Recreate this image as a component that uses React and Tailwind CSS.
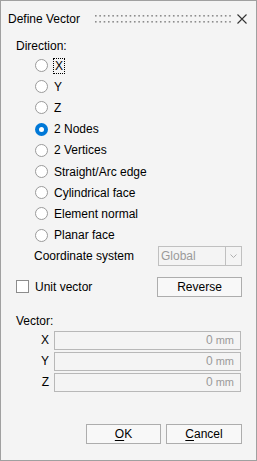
import React from "react";

const options = [
  "X",
  "Y",
  "Z",
  "2 Nodes",
  "2 Vertices",
  "Straight/Arc edge",
  "Cylindrical face",
  "Element normal",
  "Planar face",
];

const Radio = ({ checked }) =>
  checked ? (
    <span className="w-[13px] h-[13px] rounded-full bg-[#0078d7] flex items-center justify-center">
      <span className="w-[5px] h-[5px] rounded-full bg-white" />
    </span>
  ) : (
    <span className="w-[13px] h-[13px] rounded-full border border-[#9a9a9a] bg-white" />
  );

const Dots = () => (
  <svg width="136" height="10" viewBox="0 0 136 10" className="block">
    {Array.from({ length: 32 }).map((_, i) => (
      <g key={i} fill="#8c8c8c">
        <rect x={i * 4.33} y="1" width="1.6" height="1.6" />
        <rect x={i * 4.33} y="7" width="1.6" height="1.6" />
      </g>
    ))}
  </svg>
);

const Field = ({ label }) => (
  <div className="flex items-center h-[21px]">
    <span className="w-[38px] text-right pr-[5px]">{label}</span>
    <div className="w-[187px] h-[19px] border border-[#b8b8b8] bg-[#f4f4f4] flex items-center justify-end pr-[6px] text-[#9a9a9a]">
      0 <span className="text-[11px] ml-[3px]">mm</span>
    </div>
  </div>
);

export default function App() {
  return (
    <div className="w-[257px] h-[461px] border border-[#a0a0a0] bg-[#f4f4f4] flex flex-col text-[12px] text-black font-['Segoe_UI','Liberation_Sans',sans-serif] leading-none">
      {/* TITLE */}
      <div className="h-[36px] flex items-center pl-[7px] pr-[9px]">
        <span className="text-[12px] whitespace-nowrap">Define Vector</span>
        <div className="ml-[15px] flex-1 min-w-0 overflow-hidden">
          <Dots />
        </div>
        <svg width="10" height="10" viewBox="0 0 10 10" className="ml-[6px] shrink-0">
          <path d="M0.5 0.5L9.5 9.5M9.5 0.5L0.5 9.5" stroke="#333" strokeWidth="1.1" />
        </svg>
      </div>

      {/* DIRECTION */}
      <div className="pl-[15px] pr-[14px] flex flex-col">
        <div className="h-[18px] flex items-center">Direction:</div>
        <div className="flex flex-col pl-[19px]">
          {options.map((o, i) => (
            <div key={o} className="h-[21.2px] flex items-center gap-[6px]">
              <Radio checked={i === 3} />
              <span className={i === 0 ? "outline outline-1 outline-dotted outline-black px-[1px] py-[1px]" : ""}>
                {o}
              </span>
            </div>
          ))}
        </div>

        <div className="h-[21px] flex items-center pl-[18px] justify-between">
          <span>Coordinate system</span>
          <div className="w-[84px] h-[20px] border border-[#c0c0c0] flex">
            <span className="flex-1 flex items-center pl-[2px] text-[#9a9a9a] border-r border-[#c0c0c0]">
              Global
            </span>
            <span className="w-[15px] flex items-center justify-center">
              <svg width="7" height="4" viewBox="0 0 7 4">
                <path d="M0.5 0.5L3.5 3.5L6.5 0.5" stroke="#b0b0b0" fill="none" />
              </svg>
            </span>
          </div>
        </div>

        <div className="h-[20px] mt-[10px] flex items-center justify-between">
          <div className="flex items-center gap-[6px]">
            <span className="w-[13px] h-[13px] border border-[#8c8c8c] bg-white" />
            <span>Unit vector</span>
          </div>
          <button className="w-[85px] h-[20px] border border-[#adadad] bg-[#f8f8f8]">Reverse</button>
        </div>

        <div className="h-[18px] mt-[15px] flex items-center">Vector:</div>
        <div className="flex flex-col">
          <Field label="X" />
          <Field label="Y" />
          <Field label="Z" />
        </div>
      </div>

      {/* FOOTER */}
      <div className="mt-auto mb-[16px] pr-[14px] flex justify-end gap-[5px]">
        <button className="w-[75px] h-[20px] border border-[#adadad] bg-[#f8f8f8]">
          <span className="underline underline-offset-2">O</span>K
        </button>
        <button className="w-[76px] h-[20px] border border-[#adadad] bg-[#f8f8f8]">
          <span className="underline underline-offset-2">C</span>ancel
        </button>
      </div>
    </div>
  );
}
